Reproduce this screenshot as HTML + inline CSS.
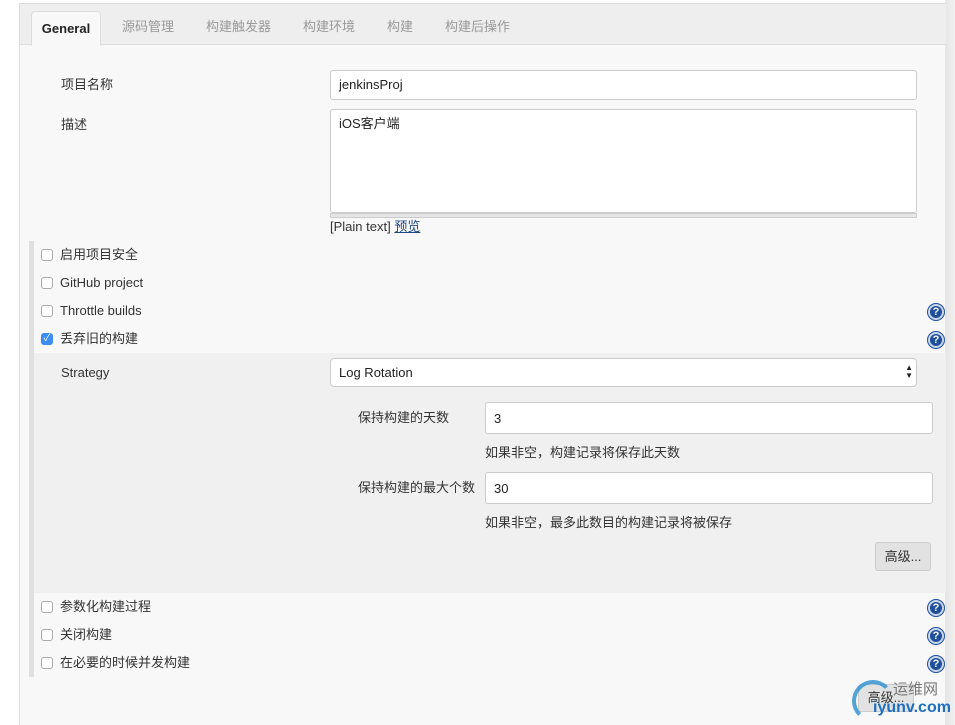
<!DOCTYPE html>
<html><head><meta charset="utf-8"><style>
*{box-sizing:border-box}
body{margin:0;width:955px;height:725px;background:#fff;font-family:"Liberation Sans","Noto Sans CJK SC",sans-serif;font-size:13px;line-height:16px;color:#333;position:relative;overflow:hidden}
.page{position:absolute;left:19px;top:3px;width:926px;height:722px;background:#f8f8f8;border-left:1px solid #ddd;border-top:1px solid #ddd}
.rstrip{position:absolute;left:945px;top:0;width:10px;height:725px;background:linear-gradient(90deg,#e4e4e4,#f2f2f2)}
.tabs{position:absolute;left:0;top:0;width:926px;height:41px;background:#eee;border-bottom:1px solid #ddd}
.tab{position:absolute;top:15px;color:#999;font-size:13px}
.tab.on{top:7px;left:11px;width:70px;height:35px;background:#f8f8f8;border:1px solid #ddd;border-bottom:none;border-radius:4px 4px 0 0;color:#222;font-weight:bold;padding-top:9px;text-align:center}
.abs{position:absolute}
.inp{position:absolute;background:#fff;border:1px solid #ccc;border-radius:3px;padding:6px 8px;color:#222}
.cb{position:absolute;left:21px;width:12px;height:12px;border:1px solid #aaa;border-radius:3px;background:#fff}
.cb.on{background:#3b8df1;border-color:#3b8df1;color:#fff;font-size:10px;line-height:10px;text-align:center}
.help{position:absolute;left:908px;width:16px;height:16px;border-radius:50%;background:#1f4f9a;border:2px solid #c9d6ea;box-shadow:0 0 0 1px #1f4f9a;color:#fff;font-size:11px;font-weight:bold;text-align:center;line-height:13px}
</style></head><body>
<div class="rstrip"></div>
<div class="page">
<div class="tabs">
<div class="tab on">General</div>
<div class="tab" style="left:102px">源码管理</div>
<div class="tab" style="left:186px">构建触发器</div>
<div class="tab" style="left:283px">构建环境</div>
<div class="tab" style="left:367px">构建</div>
<div class="tab" style="left:425px">构建后操作</div>
</div>
<div class="abs" style="left:41px;top:73px">项目名称</div>
<div class="inp" style="left:310px;top:66px;width:587px;height:30px">jenkinsProj</div>
<div class="abs" style="left:41px;top:113px">描述</div>
<div class="inp" style="left:310px;top:105px;width:587px;height:104px">iOS客户端</div>
<div class="abs" style="left:310px;top:209px;width:587px;height:5px;background:#e6e6e6;border:1px solid #ccc"></div>
<div class="abs" style="left:310px;top:215px">[Plain text] <span style="color:#204a87;text-decoration:underline">预览</span></div>
<div class="abs" style="left:9px;top:237px;width:5px;height:436px;background:#e0e0e0"></div>
<div class="abs" style="left:14px;top:349px;width:912px;height:240px;background:#f0f0f0"></div>
<div class="cb" style="top:245px"></div><div class="abs" style="left:40px;top:243px">启用项目安全</div>
<div class="cb" style="top:273px"></div><div class="abs" style="left:40px;top:271px">GitHub project</div>
<div class="cb" style="top:301px"></div><div class="abs" style="left:40px;top:299px">Throttle builds</div>
<div class="cb on" style="top:329px">✓</div><div class="abs" style="left:40px;top:327px">丢弃旧的构建</div>
<div class="help" style="top:300px">?</div>
<div class="help" style="top:328px">?</div>
<div class="abs" style="left:41px;top:361px">Strategy</div>
<div class="inp" style="left:310px;top:354px;width:587px;height:29px;border-radius:4px">Log Rotation<span style="position:absolute;right:3px;top:5px;font-size:8px;line-height:8px">▲<br>▼</span></div>
<div class="abs" style="left:338px;top:406px">保持构建的天数</div>
<div class="inp" style="left:465px;top:398px;width:448px;height:32px;padding-top:8px">3</div>
<div class="abs" style="left:465px;top:441px">如果非空，构建记录将保存此天数</div>
<div class="abs" style="left:338px;top:476px">保持构建的最大个数</div>
<div class="inp" style="left:465px;top:468px;width:448px;height:32px;padding-top:8px">30</div>
<div class="abs" style="left:465px;top:511px">如果非空，最多此数目的构建记录将被保存</div>
<div class="abs" style="left:855px;top:538px;width:56px;height:29px;background:#e2e2e2;border:1px solid #ccc;border-radius:3px;text-align:center;line-height:27px">高级...</div>
<div class="cb" style="top:597px"></div><div class="abs" style="left:40px;top:595px">参数化构建过程</div>
<div class="cb" style="top:625px"></div><div class="abs" style="left:40px;top:623px">关闭构建</div>
<div class="cb" style="top:653px"></div><div class="abs" style="left:40px;top:651px">在必要的时候并发构建</div>
<div class="help" style="top:596px">?</div>
<div class="help" style="top:624px">?</div>
<div class="help" style="top:652px">?</div>
<div class="abs" style="left:838px;top:680px;width:56px;height:28px;background:#e2e2e2;border:1px solid #ccc;border-radius:3px;text-align:center;line-height:26px">高级...</div>
</div>
<div class="abs" style="left:852px;top:680px;width:42px;height:42px;border-radius:50%;border:4px solid #2a8fd0;border-right-color:transparent;border-bottom-color:transparent;opacity:.8"></div>
<div class="abs" style="left:893px;top:682px;font-size:15px;color:#777">运维网</div>
<div class="abs" style="left:873px;top:700px;font-size:16px;color:#1f6fc0;font-weight:bold">iyunv.com</div>
</body></html>
